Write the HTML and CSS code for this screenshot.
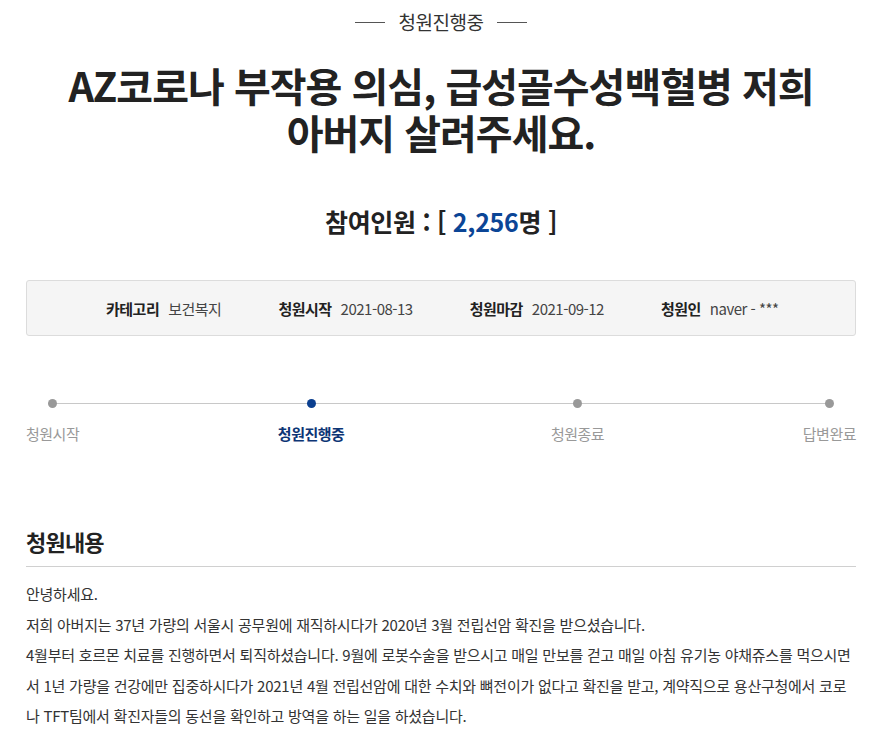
FILE: index.html
```html
<!DOCTYPE html>
<html lang="ko">
<head>
  <meta charset="UTF-8">
  <meta name="viewport" content="width=device-width, initial-scale=1.0">
  <title>청원진행중</title>
  <link rel="stylesheet" href="styles.css">
</head>
<body>
  <div class="petition">
    <div class="status"><span>청원진행중</span></div>
    <h1 class="title">AZ코로나 부작용 의심, 급성골수성백혈병 저희<br>아버지 살려주세요.</h1>
    <h2 class="count">참여인원 : [ <span>2,256</span>명 ]</h2>

    <ul class="info">
      <li><strong>카테고리</strong>보건복지</li>
      <li><strong>청원시작</strong>2021-08-13</li>
      <li><strong>청원마감</strong>2021-09-12</li>
      <li><strong>청원인</strong>naver - ***</li>
    </ul>

    <ol class="steps">
      <li>청원시작</li>
      <li class="on">청원진행중</li>
      <li>청원종료</li>
      <li>답변완료</li>
    </ol>

    <div class="content">
      <h3>청원내용</h3>
      <div class="text">
        안녕하세요.<br>
        저희 아버지는 37년 가량의 서울시 공무원에 재직하시다가 2020년 3월 전립선암 확진을 받으셨습니다.<br>
        4월부터 호르몬 치료를 진행하면서 퇴직하셨습니다. 9월에 로봇수술을 받으시고 매일 만보를 걷고 매일 아침 유기농 야채쥬스를 먹으시면서 1년 가량을 건강에만 집중하시다가 2021년 4월 전립선암에 대한 수치와 뼈전이가 없다고 확진을 받고, 계약직으로 용산구청에서 코로나 TFT팀에서 확진자들의 동선을 확인하고 방역을 하는 일을 하셨습니다.
      </div>
    </div>
  </div>
</body>
</html>
```

FILE: styles.css
```css
body {
  margin: 0;
  background: #fff;
  font-family: "Noto Sans CJK KR", "Noto Sans", sans-serif;
  color: #333;
}
.petition {
  padding: 0 27px 0 26px;
}
.status {
  display: flex;
  justify-content: center;
  padding-top: 8px;
  font-size: 19px;
  line-height: 28px;
  color: #333;
  letter-spacing: -0.5px;
}
.status span {
  display: flex;
  align-items: center;
  gap: 14px;
}
.status span::before,
.status span::after {
  content: "";
  width: 30px;
  height: 1px;
  background: #555;
}
.title {
  margin: 26px 0 0;
  text-align: center;
  font-size: 40px;
  line-height: 47px;
  font-weight: 700;
  color: #222;
  letter-spacing: -1px;
}
.count {
  margin: 48px 0 0;
  text-align: center;
  font-size: 25px;
  line-height: 34px;
  font-weight: 700;
  color: #222;
  letter-spacing: -0.3px;
}
.count span {
  color: #0b4596;
}
.info {
  list-style: none;
  margin: 42px 0 0;
  padding: 0 0 0 79px;
  height: 54px;
  display: flex;
  align-items: center;
  gap: 57px;
  background: #f5f5f5;
  border: 1px solid #dcdcdc;
  border-radius: 3px;
  font-size: 15px;
  color: #444;
  letter-spacing: -0.5px;
}
.info strong {
  color: #222;
  margin-right: 9px;
}
.steps {
  list-style: none;
  margin: 63px 0 0;
  padding: 24px 0 0;
  position: relative;
  display: flex;
  justify-content: space-between;
  font-size: 15px;
  line-height: 22px;
  color: #999;
  letter-spacing: -0.5px;
}
.steps::before {
  content: "";
  position: absolute;
  left: 27px;
  right: 27px;
  top: 4px;
  height: 1px;
  background: #c8c8c8;
}
.steps li {
  position: relative;
  text-align: center;
}
.steps li.on {
  margin-right: 8px;
  color: #0d3575;
  font-weight: 700;
}
.steps li::before {
  content: "";
  position: absolute;
  top: -24px;
  left: 50%;
  margin-left: -4.5px;
  width: 9px;
  height: 9px;
  border-radius: 50%;
  background: #999;
}
.steps li.on::before {
  background: #0b3f8f;
}
.content {
  margin-top: 81px;
}
.content h3 {
  margin: 0;
  padding-bottom: 10px;
  border-bottom: 1px solid #d0d0d0;
  font-size: 22px;
  line-height: 30px;
  font-weight: 700;
  color: #222;
  letter-spacing: -0.8px;
}
.text {
  padding-top: 12px;
  font-size: 15px;
  line-height: 30.5px;
  color: #333;
  letter-spacing: -0.25px;
}
```
